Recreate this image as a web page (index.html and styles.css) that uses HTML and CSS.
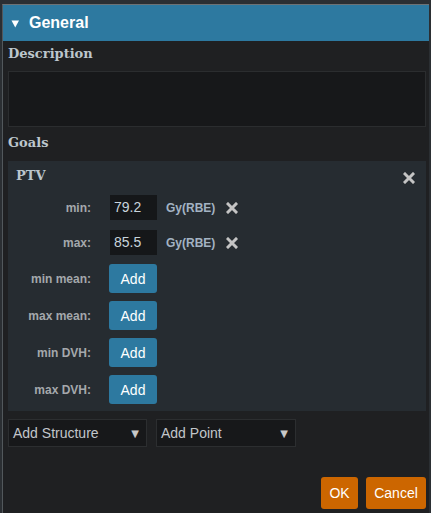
FILE: index.html
```html
<!DOCTYPE html>
<html>
<head>
<meta charset="utf-8">
<link rel="stylesheet" href="styles.css">
</head>
<body>
<div class="frame">
  <div class="header">
    <svg class="caret" width="9" height="8" viewBox="0 0 9 8"><polygon points="0.5,0.5 8,0.5 4.25,7.5" fill="#ffffff"/></svg>
    <span class="title">General</span>
  </div>
  <div class="content">
    <div class="section-label desc-label">Description</div>
    <div class="desc-box"></div>
    <div class="section-label goals-label">Goals</div>
    <div class="goal-panel">
      <div class="goal-head">
        <span class="goal-name">PTV</span>
        <svg class="xicon" width="12" height="12" viewBox="0 0 12 12"><path d="M2 2L10 10M10 2L2 10" stroke="#c4c4c4" stroke-width="3" stroke-linecap="square"/></svg>
      </div>
      <div class="row row-first">
        <span class="label">min:</span>
        <span class="num">79.2</span>
        <span class="unit">Gy(RBE)</span>
        <svg class="xicon small" width="12" height="12" viewBox="0 0 12 12"><path d="M2 2L10 10M10 2L2 10" stroke="#c4c4c4" stroke-width="3" stroke-linecap="square"/></svg>
      </div>
      <div class="row row-second">
        <span class="label">max:</span>
        <span class="num">85.5</span>
        <span class="unit">Gy(RBE)</span>
        <svg class="xicon small" width="12" height="12" viewBox="0 0 12 12"><path d="M2 2L10 10M10 2L2 10" stroke="#c4c4c4" stroke-width="3" stroke-linecap="square"/></svg>
      </div>
      <div class="row row-btn first-btn">
        <span class="label">min mean:</span>
        <button class="add">Add</button>
      </div>
      <div class="row row-btn">
        <span class="label">max mean:</span>
        <button class="add">Add</button>
      </div>
      <div class="row row-btn">
        <span class="label">min DVH:</span>
        <button class="add">Add</button>
      </div>
      <div class="row row-btn">
        <span class="label">max DVH:</span>
        <button class="add">Add</button>
      </div>
    </div>
    <div class="selects">
      <div class="select sel-structure"><span>Add Structure</span><span class="arrow">▼</span></div>
      <div class="select sel-point"><span>Add Point</span><span class="arrow">▼</span></div>
    </div>
    <div class="actions">
      <button class="act ok">OK</button>
      <button class="act cancel">Cancel</button>
    </div>
  </div>
</div>
</body>
</html>
```

FILE: styles.css
```css
html, body {
  margin: 0;
  padding: 0;
  background: #2b2f33;
  height: 513px;
  overflow: hidden;
}
.frame {
  margin: 4px 2px 0 2px;
  border-top: 1px solid #6d7275;
  border-left: 1px solid #52585c;
  background: #1f2022;
  height: 508px;
  font-family: "Liberation Sans", Arial, sans-serif;
}
.header {
  height: 36px;
  background: #2d79a0;
  display: flex;
  align-items: center;
  padding-left: 8px;
}
.caret {
  display: block;
  margin-top: 1px;
}
.title {
  margin-left: 9px;
  color: #ffffff;
  font-weight: bold;
  font-size: 16px;
}
.content {
  padding: 0 3px 0 5px;
}
.section-label {
  font-family: "DejaVu Serif", serif;
  font-weight: bold;
  font-size: 13px;
  line-height: 16px;
  color: #bcc6cc;
}
.desc-label {
  padding-top: 5px;
}
.desc-box {
  margin-top: 9px;
  height: 54px;
  background: #17181a;
  border: 1px solid #2b2d2f;
}
.goals-label {
  margin-top: 8px;
}
.goal-panel {
  margin-top: 10px;
  background: #262c31;
  padding: 7px 11px 7px 8px;
}
.goal-head {
  height: 27px;
  display: flex;
  justify-content: space-between;
  align-items: flex-start;
}
.goal-name {
  font-family: "DejaVu Serif", serif;
  font-weight: bold;
  font-size: 13px;
  line-height: 16px;
  color: #bcc6cc;
}
.goal-head .xicon {
  margin-top: 4px;
}
.row {
  display: flex;
  align-items: center;
}
.row-second {
  margin-top: 10px;
}
.row-btn {
  margin-top: 8px;
}
.row-btn.first-btn {
  margin-top: 9px;
}
.label {
  width: 75px;
  text-align: right;
  font-size: 12px;
  font-weight: bold;
  color: #a4a8ac;
  margin-right: 18px;
}
.num {
  box-sizing: border-box;
  width: 47px;
  height: 25px;
  margin-left: 1px;
  background: #151719;
  color: #c8d4dc;
  font-size: 14px;
  line-height: 25px;
  padding-left: 4px;
}
.unit {
  margin-left: 9px;
  font-size: 12px;
  font-weight: bold;
  color: #a3b3c3;
}
.xicon.small {
  margin-left: 11px;
}
.add {
  width: 48px;
  height: 29px;
  border: none;
  border-radius: 3px;
  background: #2d79a0;
  color: #ffffff;
  font-family: "Liberation Sans", Arial, sans-serif;
  font-size: 14px;
  padding: 0;
}
.selects {
  margin-top: 8px;
  display: flex;
  gap: 9px;
}
.select {
  box-sizing: border-box;
  height: 28px;
  background: #17181a;
  border: 1px solid #2c2e30;
  display: flex;
  align-items: center;
  justify-content: space-between;
  padding: 0 7px 0 4px;
  color: #c2c6ca;
  font-size: 14px;
}
.sel-structure {
  width: 139px;
}
.sel-point {
  width: 140px;
}
.arrow {
  font-size: 10px;
  color: #c8c8c8;
  font-family: "DejaVu Sans", sans-serif;
}
.actions {
  margin-top: 30px;
  display: flex;
  justify-content: flex-end;
  gap: 8px;
}
.act {
  height: 32px;
  border: none;
  border-radius: 3px;
  background: #cc6600;
  color: #ffffff;
  font-family: "Liberation Sans", Arial, sans-serif;
  font-size: 14px;
  padding: 0;
}
.ok {
  width: 37px;
}
.cancel {
  width: 60px;
}
```
